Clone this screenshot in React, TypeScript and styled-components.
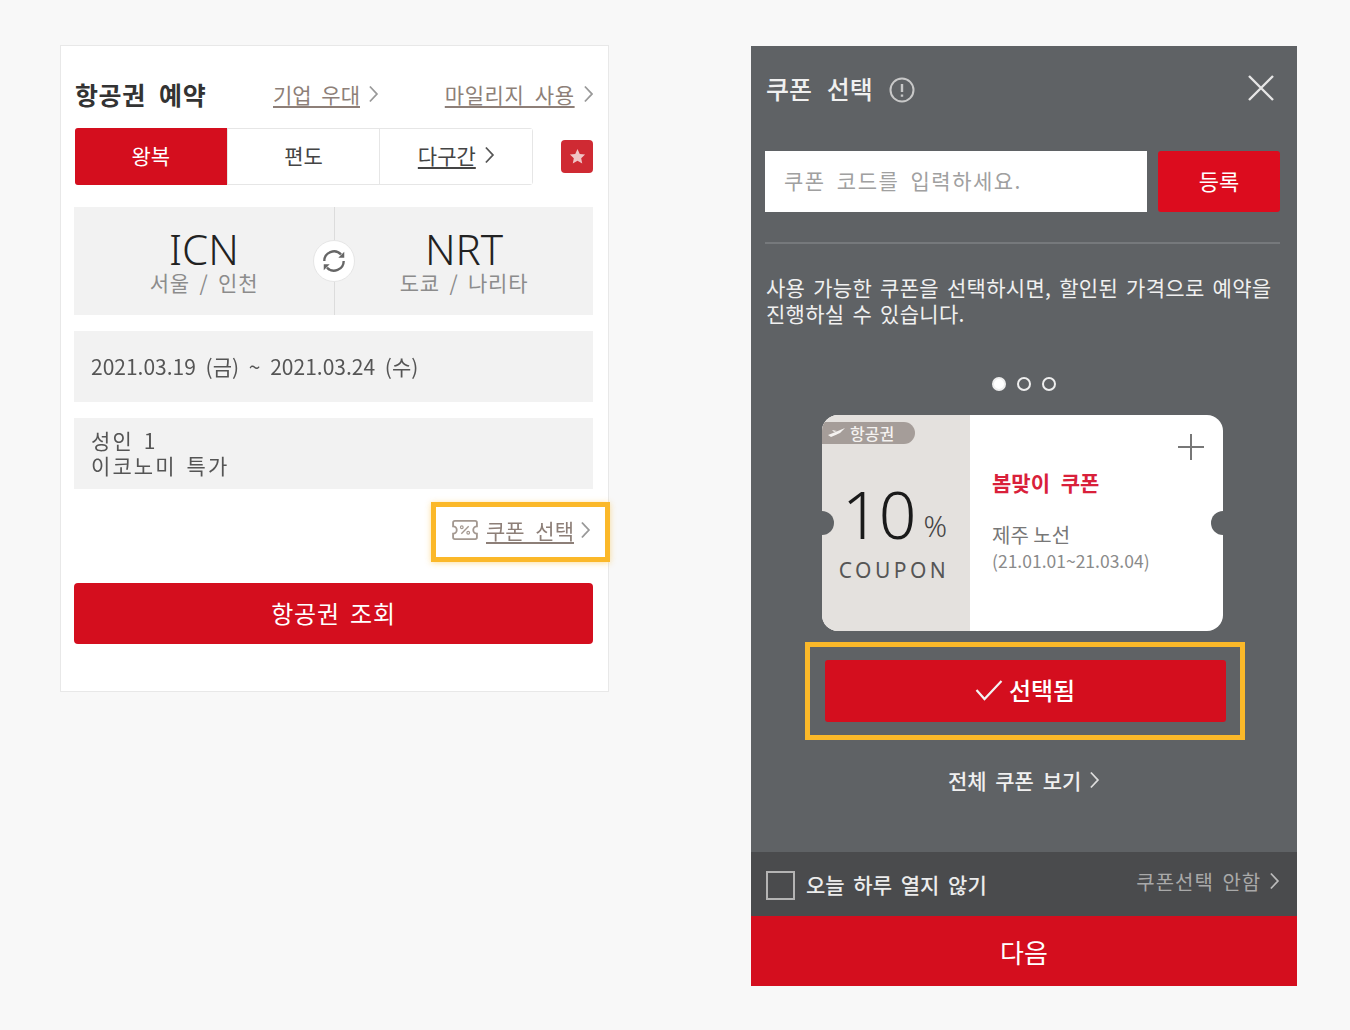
import React from 'react';
import styled, { createGlobalStyle } from 'styled-components';

const RED = '#d40e1e';
const AMBER = '#fbb829';
const FONT = '"Noto Sans CJK KR", "Noto Sans", sans-serif';

const GlobalStyle = createGlobalStyle`
  html, body {
    margin: 0;
    padding: 0;
    background: #f8f8f8;
  }
  * {
    box-sizing: border-box;
  }
  body {
    font-family: ${FONT};
    color: #333;
  }
`;

const Chevron = ({ size = 18, color = '#777' }: { size?: number; color?: string }) => (
  <svg width={size * 0.6} height={size} viewBox="0 0 10 18" fill="none" style={{ flexShrink: 0 }}>
    <polyline points="1.5,1.5 8.5,9 1.5,16.5" stroke={color} strokeWidth="1.8" />
  </svg>
);

const Page = styled.div`
  width: 1350px;
  height: 1030px;
  display: flex;
  align-items: flex-start;
  gap: 142px;
  padding: 45px 0 0 60px;
  overflow: hidden;
  filter: blur(0.65px);
`;

/* left card */
const Card = styled.section`
  width: 549px;
  height: 647px;
  background: #fff;
  border: 1px solid #e8e8e8;
  padding: 31px 15px 0 13px;
  display: flex;
  flex-direction: column;
`;

const CardHeader = styled.div`
  display: flex;
  align-items: center;
  height: 36px;
  margin-bottom: 15px;
  padding-bottom: 3px;
`;

const CardTitle = styled.h2`
  margin: 0 0 0 1px;
  font-size: 25px;
  font-weight: 700;
  line-height: 32px;
  color: #333;
  letter-spacing: 0.6px;
  word-spacing: 7px;
  width: 198px;
  flex-shrink: 0;
`;

const HeaderLink = styled.a<{ $wide?: boolean }>`
  display: flex;
  align-items: center;
  gap: 8px;
  flex-shrink: 0;
  white-space: nowrap;
  margin-left: ${p => (p.$wide ? '66px' : '0')};
  font-size: 21px;
  line-height: 30px;
  color: #8d7f78;
  word-spacing: 5px;
  letter-spacing: ${p => (p.$wide ? '0.6px' : '0')};
  span {
    text-decoration: underline;
    text-underline-offset: 3px;
  }
`;

const TabRow = styled.div`
  display: flex;
  align-items: center;
  margin-bottom: 22px;
`;

const Tabs = styled.div`
  width: 459px;
  height: 57px;
  margin-left: 1px;
  display: flex;
  border: 1px solid #e6e6e6;
  border-radius: 3px;
`;

const Tab = styled.div<{ $active?: boolean; $underline?: boolean }>`
  flex: 1;
  display: flex;
  align-items: center;
  justify-content: center;
  gap: 8px;
  margin: ${p => (p.$active ? '-1px 0 -1px -1px' : '0')};
  padding-bottom: 4px;
  font-size: 21px;
  background: ${p => (p.$active ? RED : '#fff')};
  color: ${p => (p.$active ? '#fff' : '#444')};
  border-radius: ${p => (p.$active ? '3px 0 0 3px' : '0')};
  & + & {
    border-left: 1px solid #e6e6e6;
  }
  span {
    text-decoration: ${p => (p.$underline ? 'underline' : 'none')};
    text-underline-offset: 3px;
  }
`;

const StarButton = styled.div`
  width: 32px;
  height: 33px;
  margin-left: 28px;
  background: #cf2a33;
  border-radius: 4px;
  display: flex;
  align-items: center;
  justify-content: center;
`;

const RouteBox = styled.div`
  position: relative;
  height: 108px;
  background: #f2f2f2;
  display: flex;
  margin-bottom: 16px;
`;

const RouteSide = styled.div<{ $right?: boolean }>`
  width: ${p => (p.$right ? '259px' : '260px')};
  padding-top: 20px;
  text-align: center;
  & + & {
    border-left: 1px solid #dcdcdc;
  }
`;

const Code = styled.div`
  font-family: "Noto Sans", sans-serif;
  font-size: 42px;
  font-weight: 300;
  line-height: 44px;
  color: #222;
`;

const CityName = styled.div`
  font-size: 21px;
  line-height: 22px;
  color: #8c8c8c;
  word-spacing: 4px;
  letter-spacing: 0.8px;
`;

const SwapButton = styled.div`
  position: absolute;
  left: 239px;
  top: 33px;
  width: 42px;
  height: 42px;
  border-radius: 50%;
  background: #fff;
  border: 1px solid #e6e6e6;
  display: flex;
  align-items: center;
  justify-content: center;
`;

const InfoBox = styled.div<{ $tracked?: boolean }>`
  height: 71px;
  background: #f2f2f2;
  margin-bottom: 16px;
  padding: 0 17px ${p => (p.$tracked ? '2px' : '0')};
  display: flex;
  flex-direction: column;
  justify-content: center;
  font-size: 21px;
  line-height: 25px;
  color: #555;
  word-spacing: ${p => (p.$tracked ? '3px' : '5px')};
  letter-spacing: ${p => (p.$tracked ? '2.1px' : '0')};
`;

const CouponRow = styled.div`
  display: flex;
  justify-content: flex-end;
  margin: -3px -17px 21px 0;
`;

const CouponLink = styled.a`
  width: 179px;
  height: 60px;
  border: 5px solid ${AMBER};
  box-shadow: 0 1px 6px rgba(251, 184, 41, 0.45);
  background: #fff;
  display: flex;
  align-items: center;
  gap: 6px;
  padding: 0 0 5px 14px;
  font-size: 21px;
  color: #8d7f78;
  word-spacing: 6px;
  white-space: nowrap;
  span {
    text-decoration: underline;
    text-underline-offset: 3px;
  }
`;

const SearchButton = styled.button`
  width: 519px;
  height: 61px;
  border: 0;
  border-radius: 4px;
  padding-bottom: 4px;
  background: ${RED};
  color: #fff;
  font-family: ${FONT};
  font-size: 24px;
  letter-spacing: 0.8px;
  word-spacing: 4px;
`;

/* right panel */
const Panel = styled.section`
  width: 546px;
  height: 940px;
  margin-top: 1px;
  background: #5f6265;
  display: flex;
  flex-direction: column;
`;

const PanelBody = styled.div`
  flex: 1;
  padding: 0 17px 0 14px;
  display: flex;
  flex-direction: column;
`;

const PanelHeader = styled.div`
  height: 86px;
  display: flex;
  align-items: center;
  padding-bottom: 2px;
`;

const PanelTitle = styled.h2`
  margin: 0 16px 0 1px;
  font-size: 25px;
  font-weight: 500;
  color: #f0f0f0;
  word-spacing: 9px;
`;

const InfoIcon = styled.svg`
  margin-top: 3px;
`;

const CloseButton = styled.div`
  margin-left: auto;
  margin-right: 5px;
  height: 28px;
`;

const CodeRow = styled.div`
  display: flex;
  gap: 11px;
  height: 61px;
  margin-top: 19px;
`;

const CodeInput = styled.div`
  width: 382px;
  background: #fff;
  display: flex;
  align-items: center;
  padding: 0 0 4px 19px;
  font-size: 21px;
  color: #a0a0a0;
  letter-spacing: 1.5px;
  word-spacing: 5px;
`;

const RegisterButton = styled.button`
  width: 122px;
  border: 0;
  border-radius: 3px;
  padding-bottom: 4px;
  background: #dc0c1e;
  color: #fff;
  font-family: ${FONT};
  font-size: 22px;
`;

const Divider = styled.hr`
  width: 515px;
  border: 0;
  border-top: 2px solid #76797c;
  margin: 30px 0 0;
`;

const Notice = styled.p`
  margin: 30px 0 0 1px;
  font-size: 21px;
  line-height: 26px;
  color: #f0f0f0;
  white-space: nowrap;
  word-spacing: 3px;
  letter-spacing: 0.3px;
`;

const Dots = styled.div`
  display: flex;
  justify-content: center;
  gap: 11px;
  margin: 51px 0 0 3px;
`;

const Dot = styled.span<{ $on?: boolean }>`
  width: 14px;
  height: 14px;
  border-radius: 50%;
  border: 2px solid #eee;
  background: ${p => (p.$on ? '#fff' : 'transparent')};
`;

const Ticket = styled.div`
  position: relative;
  width: 401px;
  height: 216px;
  margin: 24px 0 0 57px;
  border-radius: 16px;
  background: #fff;
  display: flex;
  overflow: hidden;
  flex-shrink: 0;
`;

const Notch = styled.span<{ $right?: boolean }>`
  position: absolute;
  top: 96px;
  ${p => (p.$right ? 'right: -12px;' : 'left: -12px;')}
  width: 24px;
  height: 24px;
  border-radius: 50%;
  background: #5f6265;
`;

const TicketLeft = styled.div`
  position: relative;
  width: 148px;
  background: #e4e1de;
  text-align: center;
  padding-top: 58px;
`;

const Badge = styled.div`
  position: absolute;
  left: 0;
  top: 7px;
  width: 93px;
  height: 22px;
  border-radius: 0 11px 11px 0;
  background: #a59d99;
  display: flex;
  align-items: center;
  gap: 4px;
  padding-left: 6px;
  font-size: 16px;
  font-weight: 500;
  color: #f4f2f0;
`;

const Amount = styled.div`
  display: flex;
  align-items: baseline;
  padding-left: 20px;
  font-family: "Noto Sans", sans-serif;
  font-weight: 300;
  font-size: 66px;
  line-height: 80px;
  color: #1a1a1a;
  letter-spacing: -1px;
  small {
    font-size: 29px;
    color: #444;
    margin-left: 8px;
    letter-spacing: 0;
    transform: translateY(-2px);
  }
`;

const CouponWord = styled.div`
  margin-top: -12px;
  font-family: "Noto Sans", sans-serif;
  font-size: 21px;
  line-height: 28px;
  letter-spacing: 3.5px;
  color: #555;
  padding-right: 4px;
`;

const TicketRight = styled.div`
  position: relative;
  flex: 1;
  padding: 52px 0 0 22px;
`;

const PlusIcon = styled.div`
  position: absolute;
  right: 18px;
  top: 18px;
  height: 28px;
`;

const TicketTitle = styled.div`
  font-size: 21px;
  font-weight: 700;
  line-height: 30px;
  color: #d9203a;
  word-spacing: 6px;
`;

const RouteName = styled.div`
  margin-top: 24px;
  font-size: 20px;
  line-height: 28px;
  color: #777;
`;

const Period = styled.div`
  font-size: 17.5px;
  line-height: 24px;
  color: #8a8a8a;
  white-space: nowrap;
`;

const SelectedFrame = styled.div`
  width: 440px;
  height: 98px;
  margin: 11px 0 0 40px;
  border: 5px solid ${AMBER};
  display: flex;
  align-items: center;
  justify-content: center;
  flex-shrink: 0;
`;

const SelectedButton = styled.button`
  width: 401px;
  height: 62px;
  border: 0;
  border-radius: 3px;
  background: ${RED};
  color: #fff;
  font-family: ${FONT};
  font-size: 24px;
  font-weight: 500;
  display: flex;
  align-items: center;
  justify-content: center;
  gap: 6px;
  padding-bottom: 4px;
`;

const AllCoupons = styled.a`
  margin-top: 24px;
  display: flex;
  align-items: center;
  justify-content: center;
  gap: 8px;
  padding-left: 3px;
  font-size: 21px;
  font-weight: 500;
  line-height: 32px;
  color: #f0f0f0;
  word-spacing: 4px;
`;

const PanelFooter = styled.div`
  height: 64px;
  background: #4a4b4d;
  display: flex;
  align-items: center;
  padding: 0 17px 0 15px;
`;

const CheckBox = styled.span`
  width: 29px;
  height: 29px;
  border: 2px solid #b4b4b4;
  margin-top: 2px;
`;

const CheckLabel = styled.span`
  margin-left: 11px;
  font-size: 21px;
  font-weight: 500;
  color: #ececec;
  word-spacing: 4px;
`;

const SkipLink = styled.a`
  margin: -6px 0 0 auto;
  display: flex;
  align-items: center;
  gap: 8px;
  font-size: 20px;
  color: #a9a9a9;
  word-spacing: 3px;
  letter-spacing: 1px;
`;

const NextButton = styled.button`
  width: 100%;
  height: 70px;
  border: 0;
  background: ${RED};
  color: #fff;
  font-family: ${FONT};
  font-size: 26px;
  flex-shrink: 0;
`;

export default function App() {
  return (
    <Page>
      <GlobalStyle />
      <Card>
        <CardHeader>
          <CardTitle>항공권 예약</CardTitle>
          <HeaderLink>
            <span>기업 우대</span>
            <Chevron color="#999" />
          </HeaderLink>
          <HeaderLink $wide>
            <span>마일리지 사용</span>
            <Chevron color="#999" />
          </HeaderLink>
        </CardHeader>

        <TabRow>
          <Tabs>
            <Tab $active>왕복</Tab>
            <Tab>편도</Tab>
            <Tab $underline>
              <span>다구간</span>
              <Chevron color="#555" />
            </Tab>
          </Tabs>
          <StarButton>
            <svg width="17" height="17" viewBox="0 0 24 24" fill="#f0c4c6">
              <path d="M12 1.5l3.2 6.9 7.5.9-5.5 5.1 1.5 7.4L12 18.1l-6.7 3.7 1.5-7.4L1.3 9.3l7.5-.9z" />
            </svg>
          </StarButton>
        </TabRow>

        <RouteBox>
          <RouteSide>
            <Code>ICN</Code>
            <CityName>서울 / 인천</CityName>
          </RouteSide>
          <RouteSide $right>
            <Code>NRT</Code>
            <CityName>도쿄 / 나리타</CityName>
          </RouteSide>
          <SwapButton>
            <svg width="28" height="28" viewBox="0 0 26 26" fill="none" stroke="#666" strokeWidth="2.2">
              <path d="M4 13a9 9 0 0 1 15.5-6.2" />
              <path d="M22 13a9 9 0 0 1-15.5 6.2" />
              <path d="M22.5 4.5v5.5h-5.5" fill="#666" stroke="none" />
              <path d="M3.5 21.5v-5.5h5.5" fill="#666" stroke="none" />
            </svg>
          </SwapButton>
        </RouteBox>

        <InfoBox>2021.03.19 (금) ~ 2021.03.24 (수)</InfoBox>
        <InfoBox $tracked>
          <div>성인 1</div>
          <div>이코노미 특가</div>
        </InfoBox>

        <CouponRow>
          <CouponLink>
            <svg width="30" height="22" viewBox="0 0 30 24" fill="none" stroke="#a39890" strokeWidth="2">
              <path d="M4 2h22a2 2 0 0 1 2 2v4a4 4 0 0 0 0 8v4a2 2 0 0 1-2 2H4a2 2 0 0 1-2-2v-4a4 4 0 0 0 0-8V4a2 2 0 0 1 2-2z" />
              <path d="M11 16l8-8" strokeWidth="1.5" />
              <circle cx="11.5" cy="9" r="1.5" strokeWidth="1.2" />
              <circle cx="18.5" cy="15" r="1.5" strokeWidth="1.2" />
            </svg>
            <span>쿠폰 선택</span>
            <Chevron color="#999" />
          </CouponLink>
        </CouponRow>

        <SearchButton>항공권 조회</SearchButton>
      </Card>

      <Panel>
        <PanelBody>
          <PanelHeader>
            <PanelTitle>쿠폰 선택</PanelTitle>
            <InfoIcon width="26" height="26" viewBox="0 0 26 26" fill="none" stroke="#c8c8c8" strokeWidth="2">
              <circle cx="13" cy="13" r="11.5" />
              <path d="M13 7v8M13 17.5v2.2" strokeWidth="2.4" />
            </InfoIcon>
            <CloseButton>
              <svg width="28" height="28" viewBox="0 0 28 28" stroke="#e6e6e6" strokeWidth="2.4">
                <path d="M2 2l24 24M26 2L2 26" />
              </svg>
            </CloseButton>
          </PanelHeader>

          <CodeRow>
            <CodeInput>쿠폰 코드를 입력하세요.</CodeInput>
            <RegisterButton>등록</RegisterButton>
          </CodeRow>
          <Divider />

          <Notice>
            사용 가능한 쿠폰을 선택하시면, 할인된 가격으로 예약을
            <br />
            진행하실 수 있습니다.
          </Notice>

          <Dots>
            <Dot $on />
            <Dot />
            <Dot />
          </Dots>

          <Ticket>
            <TicketLeft>
              <Badge>
                <svg width="18" height="12" viewBox="0 0 18 12" fill="#f4f2f0">
                  <path d="M0 8l17-7-5 5-9 4z M4 3l5 1-3 1z" />
                </svg>
                항공권
              </Badge>
              <Amount>
                10<small>%</small>
              </Amount>
              <CouponWord>COUPON</CouponWord>
            </TicketLeft>
            <TicketRight>
              <PlusIcon>
                <svg width="28" height="28" viewBox="0 0 28 28" stroke="#777" strokeWidth="2">
                  <path d="M14 1v26M1 14h26" />
                </svg>
              </PlusIcon>
              <TicketTitle>봄맞이 쿠폰</TicketTitle>
              <RouteName>제주 노선</RouteName>
              <Period>(21.01.01~21.03.04)</Period>
            </TicketRight>
            <Notch />
            <Notch $right />
          </Ticket>

          <SelectedFrame>
            <SelectedButton>
              <svg width="28" height="22" viewBox="0 0 28 22" fill="none" stroke="#f2f2f2" strokeWidth="2.2">
                <path d="M1.5 11l8 9 17-18" />
              </svg>
              선택됨
            </SelectedButton>
          </SelectedFrame>

          <AllCoupons>
            전체 쿠폰 보기
            <Chevron color="#ddd" />
          </AllCoupons>
        </PanelBody>

        <PanelFooter>
          <CheckBox />
          <CheckLabel>오늘 하루 열지 않기</CheckLabel>
          <SkipLink>
            쿠폰선택 안함
            <Chevron color="#bbb" />
          </SkipLink>
        </PanelFooter>
        <NextButton>다음</NextButton>
      </Panel>
    </Page>
  );
}
